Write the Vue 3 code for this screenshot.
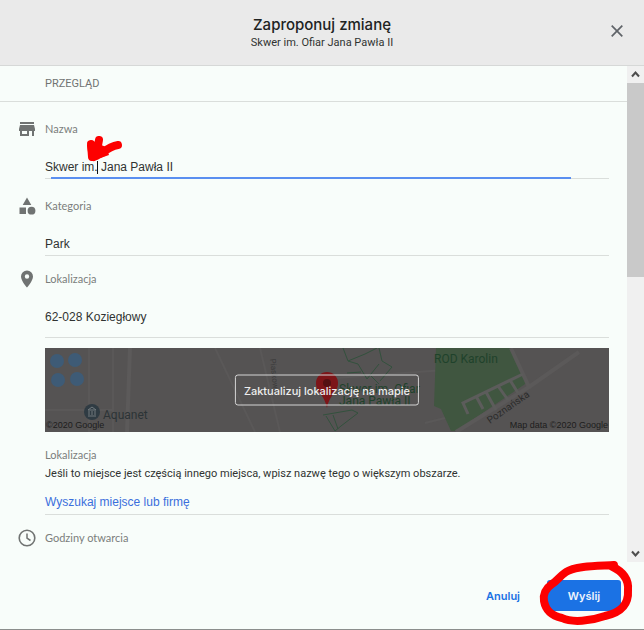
<script setup>
import { ref } from 'vue'

const name = ref('Skwer im. Jana Pawła II')
const category = ref('Park')
const address = ref('62-028 Koziegłowy')
</script>

<template>
  <form class="dialog" @submit.prevent>
    <header class="header">
      <div class="titles">
        <h1>Zaproponuj zmianę</h1>
        <p>Skwer im. Ofiar Jana Pawła II</p>
      </div>
      <button type="button" class="close" aria-label="Zamknij">
        <svg viewBox="0 0 12 12" width="12" height="12"><path d="M.7.7l10.600 10.600M11.300.7L.7 11.300" fill="none" stroke="#5f6368" stroke-width="1.700" /></svg>
      </button>
    </header>

    <div class="body">
      <main class="content">
        <h2 class="overview">PRZEGLĄD</h2>

        <section class="field first">
          <svg class="icon" viewBox="0 0 18 18" width="18" height="18">
            <path fill="#707372" fill-rule="evenodd" d="M2 2h14v2H2zM2 5h14l1 4v2h-1v5h-2v-5h-3v5H2v-5H1V9zM4 11v3h5v-3z" />
          </svg>
          <div class="main">
            <label for="name">Nazwa</label>
            <div class="entry active">
              <input id="name" v-model="name" type="text" />
              <span class="caret"></span>
              <svg class="arrow" viewBox="0 0 38 30" width="38" height="30">
                <path d="M6 9L7 22M14 5L11 21M33 10Q26 11 17 18L9 22" fill="none" stroke="#fd0000" stroke-width="8" stroke-linecap="round" stroke-linejoin="round" />
                <path d="M2 10L4 24L7 26L24 20L21 12L14 9Z" fill="#fd0000" />
              </svg>
            </div>
          </div>
        </section>

        <section class="field second">
          <svg class="icon" viewBox="0 0 18 18" width="18" height="18">
            <path fill="#707372" d="M9 .5l4.300 7.500h-8.600zM1.500 10.500h6.500v6.500h-6.500z" />
            <circle cx="13.500" cy="13.700" r="3.900" fill="#707372" />
          </svg>
          <div class="main">
            <label for="category">Kategoria</label>
            <div class="entry"><input id="category" v-model="category" type="text" /></div>
          </div>
        </section>

        <section class="field">
          <svg class="icon" viewBox="0 0 18 18" width="18" height="18">
            <path fill="#707372" fill-rule="evenodd" d="M9 .5A6 6 0 0 0 3 6.500C3 11 9 17.500 9 17.500S15 11 15 6.500A6 6 0 0 0 9 .5zM9 4.300a2.200 2.200 0 1 1 0 4.400a2.200 2.200 0 0 1 0-4.400z" />
          </svg>
          <div class="main">
            <label for="address">Lokalizacja</label>
            <div class="entry tall"><input id="address" v-model="address" type="text" /></div>
            <div class="map">
              <svg class="tiles" viewBox="0 0 564 84" preserveAspectRatio="xMidYMid slice">
                <rect width="564" height="84" fill="#555353" />
                <path d="M44 0v84M68 0v84M0 62h68M170 0L210 84M215 0l20 84M290 30l110 -8M440 60l-60 15" fill="none" stroke="#5a5858" stroke-width="2" />
                <path d="M85 0l-3 84" stroke="#5c5a5a" stroke-width="4" />
                <g fill="#3e5b76">
                  <circle cx="12" cy="13" r="7" /><circle cx="30" cy="12" r="7" />
                  <circle cx="13" cy="32" r="7" /><circle cx="32" cy="31" r="7" />
                </g>
                <path d="M391 0h77l15 34l-60 41l-12 8h-5l-10-22l-7-3z" fill="#405640" />
                <path d="M466 0l18 39L411 84M484 39L534 4" fill="none" stroke="#5b5959" stroke-width="4" />
                <path d="M478 26L418 55l5 11M431 48l7 13M441 44l10 18M453 38l10 14M465 32l8 13" fill="none" stroke="#5c5c5b" stroke-width="3" />
                <path d="M298 0l5 13l10 3l9 15M303 13l17-7l12-6M302 25l14-1M322 31l12-15M334 0l3 13l10 6l-12 14M326 28l8 8M278 67l29-5l6 3l-17 13l-6 5l-9-15M288 67l5 14" fill="none" stroke="#33513d" stroke-width="1" />
                <circle cx="47" cy="64" r="8" fill="#2f3b43" />
                <path d="M43 62l4-3l4 3zM44 63v4M47 63v4M50 63v4M43 68h8" fill="none" stroke="#727a7f" stroke-width="1" />
                <text x="58" y="71" class="place">Aquanet</text>
                <text x="389" y="15" class="park">ROD Karolin</text>
                <text x="294" y="45" class="park">Skwer im. Ofiar</text>
                <text x="294" y="57" class="park">Jana Pawła II</text>
                <text x="445" y="76" transform="rotate(-35 445 76)" class="street">Poznańska</text>
                <text x="225" y="11" transform="rotate(84 225 11)" class="minor">Piaskowa</text>
                <path d="M282 24a11 11 0 0 0-11 11c0 10 8 10 11 25c3-15 11-15 11-25a11 11 0 0 0-11-11z" fill="#7d1518" />
                <circle cx="282" cy="35" r="4" fill="#541013" />
              </svg>
              <button type="button" class="update">Zaktualizuj lokalizację na mapie</button>
              <span class="credit">©2020 Google</span>
              <span class="credit">Map data ©2020 Google</span>
            </div>
            <h3 class="sub">Lokalizacja</h3>
            <p class="hint">Jeśli to miejsce jest częścią innego miejsca, wpisz nazwę tego o większym obszarze.</p>
            <a href="#" class="search">Wyszukaj miejsce lub firmę</a>
          </div>
        </section>

        <section class="field">
          <svg class="icon" viewBox="0 0 18 18" width="18" height="18">
            <circle cx="9" cy="9" r="7.800" fill="none" stroke="#707372" stroke-width="1.600" />
            <path d="M9 4.500V9.200l3.500 2.300" fill="none" stroke="#707372" stroke-width="1.500" />
          </svg>
          <div class="main"><h3 class="hours">Godziny otwarcia</h3></div>
        </section>
      </main>

      <div class="scrollbar" aria-hidden="true">
        <svg viewBox="0 0 17 17" width="17" height="17"><path d="M5 10.500l3.500-4l3.500 4" fill="none" stroke="#4d4d4d" stroke-width="2" /></svg>
        <div class="track"><div class="thumb"></div></div>
        <svg viewBox="0 0 17 17" width="17" height="17"><path d="M5 6.500l3.500 4l3.500-4" fill="none" stroke="#4d4d4d" stroke-width="2" /></svg>
      </div>
    </div>

    <footer class="footer">
      <button type="button" class="cancel">Anuluj</button>
      <div class="send-wrap">
        <button type="submit" class="send">Wyślij</button>
        <svg class="ring" viewBox="0 0 96 68" width="96" height="68">
          <path d="M76 6C66 7 38 6 28 13C22 17 19 22 14 25C7 30 5 35 6 42C8 53 15 57 24 59C34 64 53 62 67 57C81 54 91 47 90 31C91 19 84 12 73 7" fill="none" stroke="#fd0000" stroke-width="8" stroke-linecap="round" />
        </svg>
      </div>
    </footer>
  </form>
</template>

<style>
body {
  margin: 0;
}
</style>

<style scoped>
.dialog {
  box-sizing: border-box;
  display: flex;
  flex-direction: column;
  height: 100vh;
  background: #f8fdfa;
  border-bottom: 1px solid #8b8e8c;
  color: #303331;
  font: 12px/16px "Liberation Sans", Arial, sans-serif;
}
h1, h2, h3, p {
  margin: 0;
}
button, input {
  font: inherit;
}
.header {
  display: flex;
  align-items: center;
  justify-content: center;
  height: 65px;
  flex: none;
  position: relative;
  background: #eaeaea;
  border-bottom: 1px solid #d6d8d7;
}
.titles {
  text-align: center;
}
h1 {
  font: 500 15px/20px Inter, sans-serif;
  color: #202322;
}
.titles p {
  font: 11px/16px Roboto, sans-serif;
}
.close {
  position: absolute;
  right: 15px;
  top: 19px;
  width: 24px;
  height: 24px;
  padding: 6px;
  border: 0;
  background: none;
}
.close svg {
  display: block;
}
.body {
  display: flex;
  flex: 1;
  min-height: 0;
}
.content {
  flex: 1;
  min-width: 0;
  overflow: hidden;
}
.overview {
  padding: 10px 0 9px 45px;
  border-bottom: 1px solid #dadedb;
  font: 11px/16px Roboto, sans-serif;
  color: #707372;
}
.field {
  display: grid;
  grid-template-columns: 27px 1fr;
  padding: 15px 18px 0 18px;
}
.field.first,
.field.second {
  padding-top: 19px;
}
.icon {
  display: block;
  margin-top: -1px;
}
.main {
  min-width: 0;
}
label, .sub, .hours {
  display: block;
  font: 11px/16px Lato, sans-serif;
  color: #7b7e7c;
}
.entry {
  position: relative;
  margin-top: 18px;
  border-bottom: 1px solid #dadedb;
}
.entry input {
  display: block;
  box-sizing: border-box;
  width: 100%;
  height: 23px;
  padding: 0;
  border: 0;
  outline: 0;
  background: none;
  color: #303331;
}
.entry.tall input {
  height: 32px;
  padding-bottom: 9px;
}
.active::after {
  content: "";
  position: absolute;
  left: 6px;
  right: 38px;
  bottom: -1px;
  height: 2px;
  background: #5a8ff0;
}
.caret {
  position: absolute;
  left: 52px;
  top: 6px;
  width: 1px;
  height: 13px;
  background: #111;
}
.arrow {
  position: absolute;
  left: 40px;
  top: -20px;
}
.map {
  position: relative;
  display: flex;
  align-items: flex-end;
  justify-content: space-between;
  height: 84px;
  margin-top: 10px;
  overflow: hidden;
  background: #555353;
}
.tiles {
  position: absolute;
  inset: 0;
  width: 100%;
  height: 100%;
}
.place {
  font: 12px Roboto, sans-serif;
  fill: #2c3336;
}
.park {
  font: 12px Roboto, sans-serif;
  fill: #1f422b;
}
.street {
  font: 10px Roboto, sans-serif;
  fill: #2c2c2c;
}
.minor {
  font: 8px Roboto, sans-serif;
  fill: #3c3c3c;
}
.update {
  position: absolute;
  top: 50%;
  left: 50%;
  transform: translate(-50%, -50%);
  height: 31px;
  padding: 0 8px;
  border: 1px solid #d5d5d5;
  border-radius: 3px;
  background: none;
  color: #ededed;
  font: 500 11px/16px Inter, sans-serif;
  white-space: nowrap;
}
.credit {
  position: relative;
  padding: 0 1px;
  font: 9px/13px "Liberation Sans", sans-serif;
  color: #1d1d1d;
}
.sub {
  margin-top: 15px;
}
.hint {
  margin-top: 3px;
  font: 11px/16px Roboto, sans-serif;
}
.search {
  display: block;
  padding: 12px 0 4px;
  border-bottom: 1px solid #dadedb;
  color: #3a6fdc;
  text-decoration: none;
}
.scrollbar {
  display: flex;
  flex-direction: column;
  width: 17px;
  background: #f0f0f0;
}
.scrollbar svg {
  flex: none;
}
.track {
  flex: 1;
}
.thumb {
  height: 42%;
  background: #c9c9c9;
}
.footer {
  display: flex;
  flex: none;
  align-items: center;
  justify-content: flex-end;
  gap: 17px;
  height: 67px;
  padding-right: 23px;
}
.cancel, .send {
  height: 31px;
  border: 0;
  border-radius: 3px;
  font: 600 11px/16px Inter, sans-serif;
}
.cancel {
  padding: 0 10px;
  background: none;
  color: #1b72e4;
}
.send-wrap {
  position: relative;
}
.send {
  display: block;
  width: 74px;
  background: #1b72e4;
  color: #eef4fd;
}
.ring {
  position: absolute;
  left: -9px;
  top: -21px;
}
</style>
